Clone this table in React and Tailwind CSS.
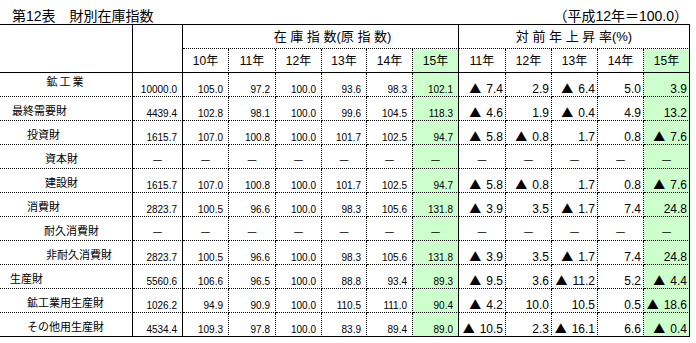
import React from 'react'

const rows = [
  { label: '鉱工業', top: true, center: true, w: '10000.0', idx: ['105.0', '97.2', '100.0', '93.6', '98.3', '102.1'], rate: ['▲7.4', '2.9', '▲6.4', '5.0', '3.9'] },
  { label: '最終需要財', pl: 'pl-[12px]', w: '4439.4', idx: ['102.8', '98.1', '100.0', '99.6', '104.5', '118.3'], rate: ['▲4.6', '1.9', '▲0.4', '4.9', '13.2'] },
  { label: '投資財', pl: 'pl-[27px]', w: '1615.7', idx: ['107.0', '100.8', '100.0', '101.7', '102.5', '94.7'], rate: ['▲5.8', '▲0.8', '1.7', '0.8', '▲7.6'] },
  { label: '資本財', pl: 'pl-[45px]', dash: true },
  { label: '建設財', pl: 'pl-[45px]', w: '1615.7', idx: ['107.0', '100.8', '100.0', '101.7', '102.5', '94.7'], rate: ['▲5.8', '▲0.8', '1.7', '0.8', '▲7.6'] },
  { label: '消費財', pl: 'pl-[27px]', w: '2823.7', idx: ['100.5', '96.6', '100.0', '98.3', '105.6', '131.8'], rate: ['▲3.9', '3.5', '▲1.7', '7.4', '24.8'] },
  { label: '耐久消費財', pl: 'pl-[44px]', dash: true },
  { label: '非耐久消費財', pl: 'pl-[46px]', w: '2823.7', idx: ['100.5', '96.6', '100.0', '98.3', '105.6', '131.8'], rate: ['▲3.9', '3.5', '▲1.7', '7.4', '24.8'] },
  { label: '生産財', pl: 'pl-[10px]', w: '5560.6', idx: ['106.6', '96.5', '100.0', '88.8', '93.4', '89.3'], rate: ['▲9.5', '3.6', '▲11.2', '5.2', '▲4.4'] },
  { label: '鉱工業用生産財', pl: 'pl-[27px]', w: '1026.2', idx: ['94.9', '90.9', '100.0', '110.5', '111.0', '90.4'], rate: ['▲4.2', '10.0', '10.5', '0.5', '▲18.6'] },
  { label: 'その他用生産財', pl: 'pl-[27px]', w: '4534.4', idx: ['109.3', '97.8', '100.0', '83.9', '89.4', '89.0'], rate: ['▲10.5', '2.3', '▲16.1', '6.6', '▲0.4'] },
]

const R_SOLID = '[border-right-style:solid]'
const R_DOT = '[border-right-style:dotted]'
const B_SOLID = '[border-bottom-style:solid]'
const B_DOT = '[border-bottom-style:dotted]'

const JP = "font-['Noto_Sans_CJK_JP',sans-serif]"
const NUM = "font-['Liberation_Sans','Noto_Sans_CJK_JP',sans-serif]"

function Dash({ last, green, rSolid }) {
  return (
    <div className={`border-r border-b border-black ${rSolid ? R_SOLID : R_DOT} ${last ? B_SOLID : B_DOT} ${green ? 'bg-[#ccffcc]' : ''} flex items-end justify-center pb-[1px] text-[12px] leading-[14px] ${JP}`}>
      －
    </div>
  )
}

function RateCell({ value, last, green, rSolid }) {
  const neg = value.startsWith('▲')
  const v = neg ? value.slice(1) : value
  return (
    <div className={`border-r border-b border-black ${rSolid ? R_SOLID : R_DOT} ${last ? B_SOLID : B_DOT} ${green ? 'bg-[#ccffcc]' : ''} flex items-end justify-end gap-[5px] pr-[2px] text-[12px] leading-[14px]`}>
      {neg && <span className={`${JP} text-[12px]`}>▲</span>}
      <span className={NUM}>{v}</span>
    </div>
  )
}

export default function App() {
  const years1 = ['10年', '11年', '12年', '13年', '14年', '15年']
  const years2 = ['11年', '12年', '13年', '14年', '15年']

  return (
    <div className={`w-[696px] h-[343px] bg-white text-black ${JP}`}>
      <div className="h-[24px] flex items-end justify-between pl-[12px] pr-[8px] text-[14px] leading-[16px]">
        <span className={NUM}>第12表　財別在庫指数</span>
        <span className={NUM}>（平成12年＝100.0）</span>
      </div>

      <div className="w-[690px] border-t border-black grid grid-cols-[133px_50px_46px_47px_46px_45px_46px_46px_47px_46px_46px_46px_46px] grid-rows-[repeat(13,24px)]">
        {/* header */}
        <div className="row-span-2 border-r border-b border-black"></div>
        <div className="row-span-2 border-r border-b border-black"></div>
        <div className={`col-span-6 border-r border-b border-black ${R_SOLID} ${B_DOT} flex items-center justify-center pl-[24px] text-[13px] leading-[16px] ${NUM}`}>
          在 庫 指 数(原 指 数)
        </div>
        <div className={`col-span-5 border-r border-b border-black ${R_SOLID} ${B_DOT} flex items-center justify-center text-[13px] leading-[16px] ${NUM}`}>
          対 前 年 上 昇 率(%)
        </div>
        {years1.map((y, i) => (
          <div key={'a' + y} className={`border-r border-b border-black ${i == 5 ? R_SOLID : R_DOT} ${B_SOLID} ${i == 5 ? 'bg-[#ccffcc]' : ''} flex items-center justify-center text-[12px] leading-[14px] ${NUM}`}>
            {y}
          </div>
        ))}
        {years2.map((y, i) => (
          <div key={'b' + y} className={`border-r border-b border-black ${i == 4 ? R_SOLID : R_DOT} ${B_SOLID} ${i == 4 ? 'bg-[#ccffcc]' : ''} flex items-center justify-center text-[12px] leading-[14px] ${NUM}`}>
            {y}
          </div>
        ))}

        {/* body */}
        {rows.map((r, ri) => {
          const last = ri == rows.length - 1
          const bStyle = last ? B_SOLID : B_DOT
          return (
            <React.Fragment key={r.label}>
              <div className={`border-r border-b border-black ${R_SOLID} ${bStyle} flex items-start text-[11px] leading-[14px] ${r.center ? 'justify-center pt-[1px] tracking-[2px]' : `${r.pl} pt-[6px]`}`}>
                {r.label}
              </div>
              {r.dash ? (
                <>
                  <Dash last={last} rSolid />
                  {[0, 1, 2, 3, 4, 5].map(i => <Dash key={'i' + i} last={last} green={i == 5} rSolid={i == 5} />)}
                  {[0, 1, 2, 3, 4].map(i => <Dash key={'r' + i} last={last} green={i == 4} rSolid={i == 4} />)}
                </>
              ) : (
                <>
                  <div className={`border-r border-b border-black ${R_SOLID} ${bStyle} flex items-end justify-end pr-[5px] text-[10px] leading-[12px] ${NUM}`}>
                    {r.w}
                  </div>
                  {r.idx.map((v, i) => (
                    <div key={'i' + i} className={`border-r border-b border-black ${i == 5 ? R_SOLID : R_DOT} ${bStyle} ${i == 5 ? 'bg-[#ccffcc]' : ''} flex items-end justify-end pr-[5px] text-[10px] leading-[12px] ${NUM}`}>
                      {v}
                    </div>
                  ))}
                  {r.rate.map((v, i) => (
                    <RateCell key={'r' + i} value={v} last={last} green={i == 4} rSolid={i == 4} />
                  ))}
                </>
              )}
            </React.Fragment>
          )
        })}
      </div>
    </div>
  )
}
